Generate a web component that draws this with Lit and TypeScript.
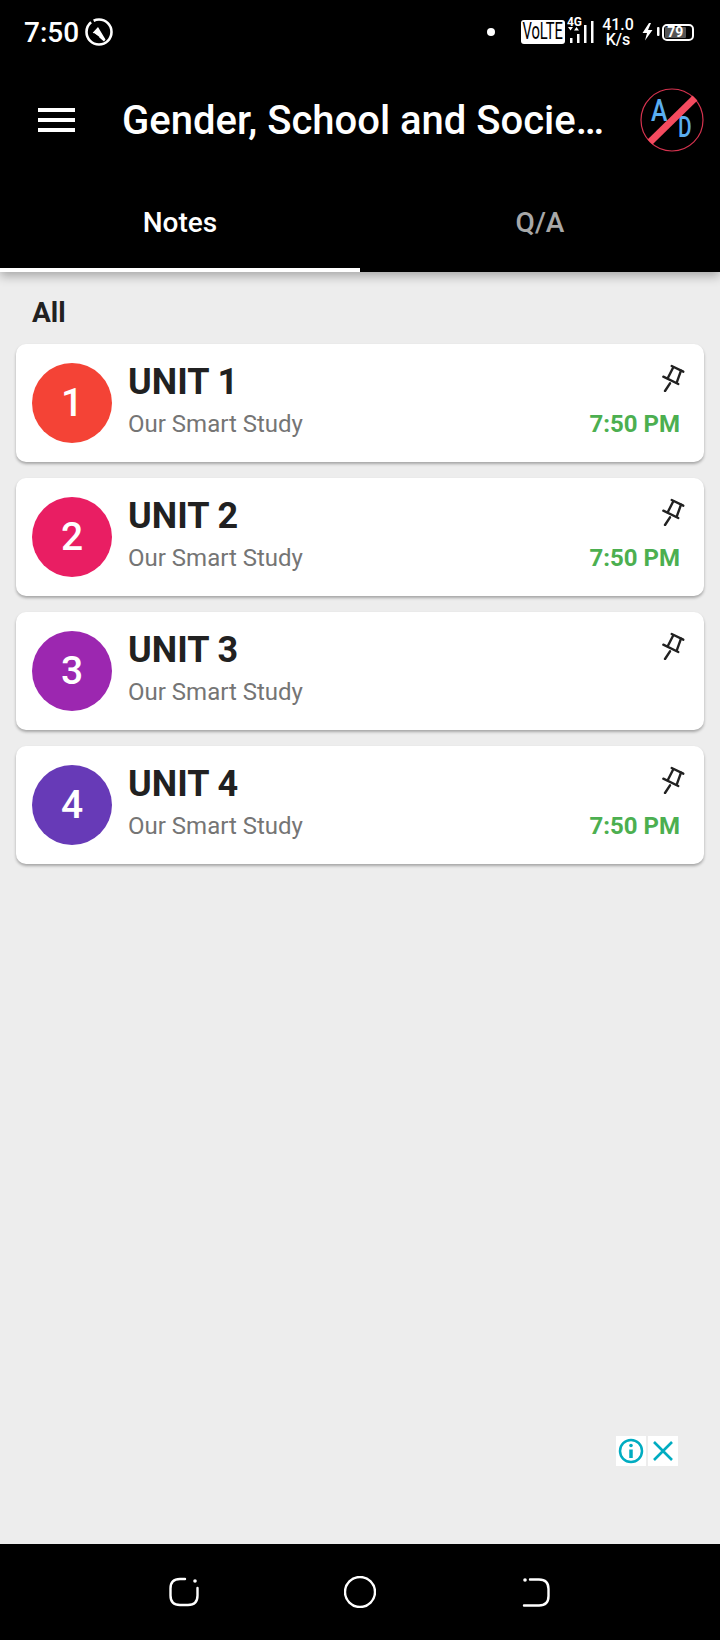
import { LitElement, css, html, svg } from "lit";
import { customElement } from "lit/decorators.js";

const UNITS = [
  { n: 1, color: "#f44336", time: "7:50 PM" },
  { n: 2, color: "#e91e63", time: "7:50 PM" },
  { n: 3, color: "#9c27b0", time: "" },
  { n: 4, color: "#673ab7", time: "7:50 PM" },
];

const pin = svg`
  <svg class="pin" width="24" height="28" viewBox="0 0 24 28" fill="none" stroke="#212121" stroke-width="2.4" stroke-linecap="round">
    <path d="M10.700 2 22.300 7.700" />
    <path d="M2.300 12.700 17.300 20" />
    <path d="M12.300 3.300 6.700 14.300" />
    <path d="M20 6.700 15.700 18.700" />
    <path d="M9 19.300 4 27" />
  </svg>
`;

@customElement("app-root")
export class AppRoot extends LitElement {
  static styles = css`
    :host {
      display: flex;
      flex-direction: column;
      width: 720px;
      height: 1640px;
      background: #ededed;
      font-family: Roboto, "Liberation Sans", sans-serif;
      color: #212121;
      overflow: hidden;
    }

    svg {
      display: block;
      flex: none;
    }

    .top {
      background: #000;
      color: #fff;
      box-shadow: 0 4px 10px rgba(0, 0, 0, 0.3);
      position: relative;
    }

    .status {
      height: 64px;
      display: flex;
      align-items: center;
      padding: 0 26px 0 24px;
    }

    .clock {
      font-size: 28px;
      font-weight: 500;
      margin-right: 5px;
    }

    .spacer {
      flex: 1;
    }

    .dot {
      width: 8px;
      height: 8px;
      border-radius: 50%;
      background: #fff;
      margin-right: 26px;
    }

    .volte {
      width: 44px;
      height: 24px;
      border-radius: 3px;
      background: #fff;
      color: #000;
      font-size: 23px;
      line-height: 24px;
      text-align: center;
      white-space: nowrap;
    }

    .volte span {
      display: inline-block;
      transform: scaleX(0.64);
      transform-origin: center;
      margin: 0 -12px;
    }

    .signal {
      width: 28px;
      height: 26px;
      margin: 0 0 4px 2px;
      display: flex;
      flex-direction: column;
    }

    .g4 {
      align-self: flex-start;
      height: 10px;
      font-size: 13px;
      font-weight: 700;
      line-height: 10px;
      transform: scaleX(0.92);
      transform-origin: left;
    }

    .signal svg {
      overflow: visible;
    }

    .speed {
      width: 36px;
      margin-left: 5px;
      font-size: 16px;
      font-weight: 500;
      line-height: 15px;
      text-align: center;
    }

    .bolt {
      margin-left: 5px;
    }

    .battery {
      width: 32px;
      height: 17px;
      margin-left: 1px;
      border: 2px solid #fff;
      border-radius: 5px;
      box-sizing: border-box;
      padding: 1px;
      display: flex;
    }

    .level {
      width: 79%;
      background: #555;
      border-radius: 1px;
      font-size: 14px;
      font-weight: 700;
      line-height: 11px;
      text-align: center;
    }

    .bar {
      height: 112px;
      display: flex;
      align-items: center;
      padding: 0 16px 0 38px;
    }

    .menu {
      width: 37px;
      display: flex;
      flex-direction: column;
      gap: 6px;
      margin-right: 47px;
    }

    .menu i {
      display: block;
      height: 4px;
      background: #fff;
    }

    .title {
      flex: 1;
      font-size: 40px;
      font-weight: 500;
      white-space: nowrap;
    }

    .tabs {
      height: 96px;
      display: flex;
    }

    .tab {
      flex: 1;
      box-sizing: border-box;
      padding-top: 30px;
      text-align: center;
      font-size: 28px;
      font-weight: 500;
      color: #a8a8a8;
      border-bottom: 4px solid transparent;
    }

    .tab.active {
      color: #fff;
      border-bottom-color: #fff;
    }

    .content {
      flex: 1;
      display: flex;
      flex-direction: column;
      padding: 0 16px;
    }

    .label {
      font-size: 28px;
      font-weight: 700;
      line-height: 30px;
      padding: 26px 0 16px 16px;
    }

    .cards {
      display: flex;
      flex-direction: column;
      gap: 16px;
    }

    .card {
      height: 118px;
      box-sizing: border-box;
      display: flex;
      align-items: center;
      padding: 0 24px 0 16px;
      background: #fff;
      border-radius: 10px;
      box-shadow: 0 2px 3px rgba(0, 0, 0, 0.3);
    }

    .avatar {
      width: 80px;
      height: 80px;
      border-radius: 50%;
      margin-right: 16px;
      display: flex;
      align-items: center;
      justify-content: center;
      color: #fff;
      font-size: 39px;
      font-weight: 500;
      flex: none;
    }

    .body {
      flex: 1;
      display: flex;
      flex-direction: column;
      gap: 3px;
    }

    .row {
      display: flex;
      align-items: center;
      justify-content: space-between;
    }

    .row.first {
      height: 40px;
    }

    .row.second {
      height: 38px;
      margin-bottom: 1px;
    }

    .pin {
      align-self: flex-start;
      margin: 2px -5px 0 0;
    }

    .name {
      font-size: 36px;
      font-weight: 700;
      line-height: 40px;
    }

    .sub {
      font-size: 24px;
      color: #757575;
    }

    .time {
      font-size: 24px;
      font-weight: 700;
      color: #4caf50;
    }

    .ad {
      margin-top: auto;
      margin-bottom: 78px;
      align-self: flex-end;
      margin-right: 26px;
      display: flex;
      gap: 2px;
    }

    .ad div {
      width: 30px;
      height: 30px;
      background: #fff;
      display: flex;
      align-items: center;
      justify-content: center;
    }

    .nav {
      height: 96px;
      background: #000;
      display: flex;
      align-items: center;
      justify-content: center;
      gap: 144px;
    }
  `;

  render() {
    return html`
      <div class="top">
        <div class="status">
          <span class="clock">7:50</span>
          <svg width="30" height="30" viewBox="0 0 30 30" fill="none" stroke="#fff">
            <circle cx="15" cy="15" r="12.500" stroke-width="2.600" stroke-dasharray="50 3 26" />
            <path d="M14 10 8.700 15.700 13 18.500 20 24.500 21.500 22.500z" fill="#fff" stroke="none" />
            <path d="M9.500 16.500 15 20.500" stroke="#000" stroke-width="1.500" />
          </svg>
          <span class="spacer"></span>
          <span class="dot"></span>
          <span class="volte"><span>VoLTE</span></span>
          <div class="signal">
            <span class="g4">4G</span>
            <svg width="28" height="16" viewBox="0 0 28 16" fill="#fff">
              <path d="M1 0H6L3.500 3.500zM7 3.500 9.500 0 12 3.500z" />
              <rect x="3" y="11" width="2.500" height="5" />
              <rect x="10" y="7" width="2.500" height="9" />
              <rect x="17" y="-2" width="2.500" height="18" />
              <rect x="24" y="-6" width="2.500" height="22" />
            </svg>
          </div>
          <div class="speed">41.0<br />K/s</div>
          <svg class="bolt" width="20" height="20" viewBox="0 0 20 20" fill="#fff">
            <path d="M8 1 1.500 11h4.500l-2 7.500 7.500-10.500H7l3-7z" />
            <rect x="16" y="5" width="2.500" height="9" rx="1" />
          </svg>
          <div class="battery"><div class="level">79</div></div>
        </div>

        <div class="bar">
          <div class="menu"><i></i><i></i><i></i></div>
          <span class="title">Gender, School and Socie…</span>
          <svg width="64" height="64" viewBox="0 0 64 64" fill="none">
            <circle cx="32" cy="32" r="31" stroke="#d6334f" stroke-width="1.200" />
            <text transform="translate(11 33) scale(0.8 1)" font-family="Roboto, sans-serif" font-size="31" font-weight="500" fill="#5aaef0">A</text>
            <text transform="translate(38 49) scale(0.72 1)" font-family="Roboto, sans-serif" font-size="29" font-weight="500" fill="#5aaef0">D</text>
            <path d="M10 54 55 10" stroke="#f44b5f" stroke-width="7" />
          </svg>
        </div>

        <div class="tabs">
          <div class="tab active">Notes</div>
          <div class="tab">Q/A</div>
        </div>
      </div>

      <div class="content">
        <div class="label">All</div>
        <div class="cards">
          ${UNITS.map(
            (unit) => html`
              <div class="card">
                <div class="avatar" style="background:${unit.color}">${unit.n}</div>
                <div class="body">
                  <div class="row first"><span class="name">UNIT ${unit.n}</span>${pin}</div>
                  <div class="row second"><span class="sub">Our Smart Study</span><span class="time">${unit.time}</span></div>
                </div>
              </div>
            `,
          )}
        </div>
        <div class="ad">
          <div>
            <svg width="26" height="26" viewBox="0 0 26 26" fill="none" stroke="#00acc1" stroke-width="2.500">
              <circle cx="13" cy="13" r="11" />
              <path d="M13 11.500V20" stroke-width="3.500" />
              <circle cx="13" cy="7.500" r="1.800" fill="#00acc1" stroke="none" />
            </svg>
          </div>
          <div>
            <svg width="22" height="22" viewBox="0 0 22 22" fill="none" stroke="#00acc1" stroke-width="2.600">
              <path d="M2 2 20 20M20 2 2 20" />
            </svg>
          </div>
        </div>
      </div>

      <div class="nav">
        <svg width="32" height="32" viewBox="0 0 32 32" fill="none" stroke="#fff" stroke-width="2.400" stroke-linecap="round">
          <path d="M17 3H12Q2.500 3 2.500 12.500V19.500Q2.500 29 12 29H20Q29.500 29 29.500 19.500V12" />
          <circle cx="27" cy="5" r="1.800" fill="#fff" stroke="none" />
        </svg>
        <svg width="32" height="32" viewBox="0 0 32 32" fill="none" stroke="#fff" stroke-width="2.400">
          <circle cx="16" cy="16" r="15" />
        </svg>
        <svg width="32" height="32" viewBox="0 0 32 32" fill="none" stroke="#fff" stroke-width="2.400" stroke-linecap="round">
          <path d="M10 3.500H19Q28.500 3.500 28.500 13V20Q28.500 29.500 19 29.500H4" />
          <circle cx="5" cy="4" r="1.800" fill="#fff" stroke="none" />
        </svg>
      </div>
    `;
  }
}
